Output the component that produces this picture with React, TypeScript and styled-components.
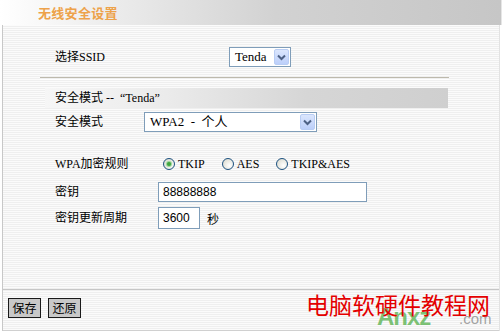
import React from "react";
import styled, { createGlobalStyle } from "styled-components";

const Global = createGlobalStyle`
  html, body { margin: 0; padding: 0; background: #fff; }
  body { font-family: "Noto Sans CJK SC", sans-serif; }
`;

const CJK = `"Liberation Serif", "Noto Sans CJK SC", serif`;

const Page = styled.div`
  width: 502px;
  height: 331px;
  display: flex;
  flex-direction: column;
  overflow: hidden;
  position: relative;
  font-family: ${CJK};
  font-size: 12px;
  color: #000;
`;

const Header = styled.div`
  height: 25px;
  flex: none;
  display: flex;
  align-items: center;
  padding-left: 38px;
  background: linear-gradient(to right, #ffffff 0%, #eeeeee 20%, #d2d2d2 55%, #c6c6c6 100%);
  border-right: 1px solid #e6e6e6;
`;

const Title = styled.span`
  font-family: "Noto Sans CJK SC", sans-serif;
  font-weight: 700;
  font-size: 13px;
  color: #eda24a;
  letter-spacing: 0.3px;
`;

const Body = styled.div`
  flex: 1;
  display: flex;
  flex-direction: column;
  margin-left: 2px;
  margin-right: 2px;
  border-left: 1px solid #c8c8c8;
  border-right: 1px solid #e2e2e2;
  background: repeating-linear-gradient(to bottom, #fbfbfb 0px, #fbfbfb 1px, #efefef 1px, #efefef 2px);
`;

const Form = styled.div`
  flex: 1;
  display: flex;
  flex-direction: column;
`;

const Row = styled.div<{ $top: number; $h?: number; $label: number }>`
  display: grid;
  grid-template-columns: ${(p) => p.$label}px auto;
  align-items: center;
  height: ${(p) => p.$h ?? 20}px;
  margin-top: ${(p) => p.$top}px;
  padding-left: 52px;
`;

const Label = styled.span`
  font-family: "Liberation Serif", "Noto Sans CJK SC", serif;
  font-size: 12px;
  line-height: 14px;
  white-space: pre;
`;

const Divider = styled.div`
  margin: 10px 50px 0 37px;
  height: 1px;
  border-top: 1px solid #bdb9ac;
  border-bottom: 1px solid #ffffff;
`;

const SectionBar = styled.div`
  margin: 8px 51px 0 42px;
  height: 20px;
  display: flex;
  align-items: center;
  padding-left: 10px;
  background: linear-gradient(to right, #f6f6f6 0%, #ebebeb 30%, #d6d6d6 65%, #cfcfcf 100%);
  font-size: 12px;
`;

const SelectBox = styled.div<{ $w: number }>`
  width: ${(p) => p.$w}px;
  height: 20px;
  box-sizing: border-box;
  border: 1px solid #7f9db9;
  background: #fff;
  display: flex;
  align-items: center;
  justify-content: space-between;
  padding: 0 1px 0 5px;
`;

const SelectText = styled.span`
  font-family: "Liberation Serif", "Noto Sans CJK SC", serif;
  font-size: 13px;
  line-height: 16px;
  white-space: pre;
`;

const Arrow = styled.span`
  width: 15px;
  height: 16px;
  box-sizing: border-box;
  border: 1px solid #b9cdf4;
  border-radius: 2px;
  background: linear-gradient(to bottom, #dbe6fd, #bccffa);
  display: flex;
  align-items: center;
  justify-content: center;
`;

const Radios = styled.div`
  display: flex;
  align-items: center;
`;

const RadioItem = styled.label<{ $gap: number }>`
  display: flex;
  align-items: center;
  margin-right: ${(p) => p.$gap}px;
  font-family: "Liberation Serif", serif;
  font-size: 12px;
`;

const Circle = styled.span<{ $on?: boolean }>`
  width: 12px;
  height: 12px;
  box-sizing: border-box;
  border-radius: 50%;
  border: 1px solid #1c5180;
  background: radial-gradient(circle at 65% 65%, #ffffff 0%, #e6e6de 60%, #cfcfc6 100%);
  margin: 0 3px 0 5px;
  display: flex;
  align-items: center;
  justify-content: center;
  &::after {
    content: "";
    display: ${(p) => (p.$on ? "block" : "none")};
    width: 4px;
    height: 4px;
    border-radius: 50%;
    background: #3fa43f;
    box-shadow: 0 0 1px 1px #8fd18f;
  }
`;

const TextInput = styled.div<{ $w: number; $h?: number }>`
  width: ${(p) => p.$w}px;
  height: ${(p) => p.$h ?? 20}px;
  box-sizing: border-box;
  border: 1px solid #7f9db9;
  background: #fff;
  display: flex;
  align-items: center;
  padding-left: 4px;
  font-family: "Liberation Sans", sans-serif;
  font-size: 12px;
`;

const Inline = styled.div`
  display: flex;
  align-items: center;
`;

const Unit = styled.span`
  margin-left: 7px;
  font-family: "Noto Sans CJK SC", sans-serif;
  font-size: 12px;
`;

const Footer = styled.div`
  height: 42px;
  flex: none;
  border-top: 1px solid #c6c6c6;
  border-bottom: 1px solid #d0d0d0;
  display: flex;
  align-items: flex-start;
  padding: 8px 0 0 5px;
  gap: 7px;
  position: relative;
  box-sizing: border-box;
`;

const Button = styled.button`
  width: 33px;
  height: 20px;
  box-sizing: border-box;
  padding: 0;
  border: 1px solid #1a1a1a;
  background: #c8c8c8;
  font-family: "Noto Sans CJK SC", sans-serif;
  font-size: 12px;
  line-height: 16px;
  color: #000;
`;

const Watermark = styled.div`
  position: absolute;
  left: 300px;
  top: 2px;
  width: 200px;
  height: 38px;
  pointer-events: none;
`;

const WmGreen = styled.span`
  position: absolute;
  left: 74px;
  top: 14px;
  font-family: "Liberation Sans", sans-serif;
  font-size: 24px;
  line-height: 22px;
  font-weight: 700;
  color: rgba(70, 170, 60, 0.7);
  letter-spacing: -1px;
`;

const WmCom = styled.span`
  position: absolute;
  left: 156px;
  top: 19px;
  font-family: "Liberation Sans", sans-serif;
  font-size: 15px;
  line-height: 16px;
  color: rgba(140, 140, 140, 0.8);
`;

const WmRed = styled.span`
  position: absolute;
  left: 3px;
  top: 0px;
  font-family: "Noto Sans CJK SC", sans-serif;
  font-size: 23px;
  line-height: 24px;
  color: #e40000;
  white-space: nowrap;
`;

const Chevron = () => (
  <svg width="9" height="7" viewBox="0 0 9 7">
    <path d="M1 1.5 L4.5 5 L8 1.5" fill="none" stroke="#4d6185" strokeWidth="2" />
  </svg>
);

const Select = ({ w, text }: { w: number; text: string }) => (
  <SelectBox $w={w}>
    <SelectText>{text}</SelectText>
    <Arrow>
      <Chevron />
    </Arrow>
  </SelectBox>
);

export default function App() {
  return (
    <>
      <Global />
      <Page>
        <Header>
          <Title>无线安全设置</Title>
        </Header>
        <Body>
          <Form>
            <Row $top={22} $label={174}>
              <Label>选择SSID</Label>
              <Select w={62} text="Tenda" />
            </Row>
            <Divider />
            <SectionBar>
              <Label>{"安全模式 --  “Tenda”"}</Label>
            </SectionBar>
            <Row $top={4} $label={89}>
              <Label>安全模式</Label>
              <Select w={173} text="WPA2  -  个人" />
            </Row>
            <Row $top={22} $label={103}>
              <Label>WPA加密规则</Label>
              <Radios>
                <RadioItem $gap={12}>
                  <Circle $on />
                  TKIP
                </RadioItem>
                <RadioItem $gap={12}>
                  <Circle />
                  AES
                </RadioItem>
                <RadioItem $gap={0}>
                  <Circle />
                  TKIP&amp;AES
                </RadioItem>
              </Radios>
            </Row>
            <Row $top={8} $label={103}>
              <Label>密钥</Label>
              <TextInput $w={209}>88888888</TextInput>
            </Row>
            <Row $top={5} $h={22} $label={103}>
              <Label>密钥更新周期</Label>
              <Inline>
                <TextInput $w={42} $h={22}>3600</TextInput>
                <Unit>秒</Unit>
              </Inline>
            </Row>
          </Form>
          <Footer>
            <Button>保存</Button>
            <Button>还原</Button>
            <Watermark>
              <WmGreen>Anxz</WmGreen>
              <WmCom>.com</WmCom>
              <WmRed>电脑软硬件教程网</WmRed>
            </Watermark>
          </Footer>
        </Body>
      </Page>
    </>
  );
}
